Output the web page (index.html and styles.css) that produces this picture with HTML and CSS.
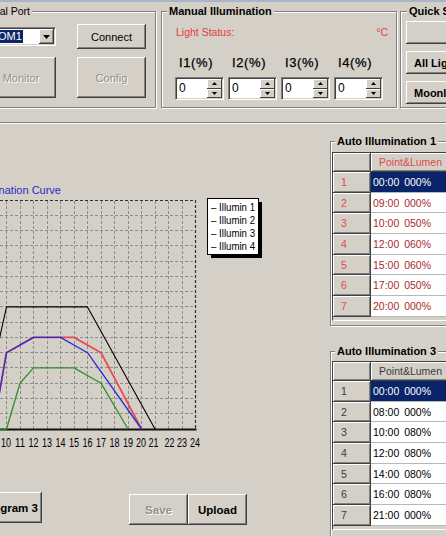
FILE: index.html
```html
<!DOCTYPE html>
<html>
<head>
<meta charset="utf-8">
<link rel="stylesheet" href="styles.css">
</head>
<body>
<div class="app">
  <div class="titlebar"></div>
  <div class="top">
    <div class="group serial">
      <div class="group-title serial-title">Serial Port</div>
      <div class="serial-grid">
        <div class="combo">
          <span class="combo-text"><span class="combo-sel">COM1</span></span>
          <span class="combo-btn"><svg width="7" height="4" viewBox="0 0 7 4"><path d="M0 0h7L3.5 4z" fill="#000"/></svg></span>
        </div>
        <button class="btn">Connect</button>
        <button class="btn disabled">Monitor</button>
        <button class="btn disabled">Config</button>
      </div>
    </div>

    <div class="group manual">
      <div class="group-title manual-title">Manual Illumination</div>
      <div class="status"><span>Light Status:</span><span>°C</span></div>
      <div class="spins">
        <div class="spin-col">
          <div class="spin-label">I1(%)</div>
          <div class="spin"><span class="spin-val">0</span><span class="spin-btns"><span class="sb"><svg width="5" height="3" viewBox="0 0 5 3"><path d="M2.5 0L5 3H0z"/></svg></span><span class="sb"><svg width="5" height="3" viewBox="0 0 5 3"><path d="M0 0h5L2.5 3z"/></svg></span></span></div>
        </div>
        <div class="spin-col">
          <div class="spin-label">I2(%)</div>
          <div class="spin"><span class="spin-val">0</span><span class="spin-btns"><span class="sb"><svg width="5" height="3" viewBox="0 0 5 3"><path d="M2.5 0L5 3H0z"/></svg></span><span class="sb"><svg width="5" height="3" viewBox="0 0 5 3"><path d="M0 0h5L2.5 3z"/></svg></span></span></div>
        </div>
        <div class="spin-col">
          <div class="spin-label">I3(%)</div>
          <div class="spin"><span class="spin-val">0</span><span class="spin-btns"><span class="sb"><svg width="5" height="3" viewBox="0 0 5 3"><path d="M2.5 0L5 3H0z"/></svg></span><span class="sb"><svg width="5" height="3" viewBox="0 0 5 3"><path d="M0 0h5L2.5 3z"/></svg></span></span></div>
        </div>
        <div class="spin-col">
          <div class="spin-label">I4(%)</div>
          <div class="spin"><span class="spin-val">0</span><span class="spin-btns"><span class="sb"><svg width="5" height="3" viewBox="0 0 5 3"><path d="M2.5 0L5 3H0z"/></svg></span><span class="sb"><svg width="5" height="3" viewBox="0 0 5 3"><path d="M0 0h5L2.5 3z"/></svg></span></span></div>
        </div>
      </div>
    </div>

    <div class="group quick">
      <div class="group-title quick-title">Quick Set</div>
      <div class="quick-btns">
        <button class="btn bold qbtn"></button>
        <button class="btn bold qbtn">All Light On</button>
        <button class="btn bold qbtn">Moonlight</button>
      </div>
    </div>
  </div>

  <div class="sep"></div>

  <div class="main">
    <div class="left">
      <svg class="chart" width="280" height="272" viewBox="0 180 280 272">
        <text class="chart-title" x="61" y="194" text-anchor="end">Illumination Curve</text>
        <path class="grid-minor" d="M-10 215.5H196M-10 230.5H196M-10 245.5H196M-10 261.5H196M-10 276.5H196M-10 291.5H196M-10 306.5H196M-10 322.5H196M-10 337.5H196M-10 352.5H196M-10 367.5H196M-10 383.5H196M-10 398.5H196M-10 413.5H196M-7.5 201V429M6.5 201V429M20.5 201V429M33.5 201V429M47.5 201V429M60.5 201V429M74.5 201V429M87.5 201V429M101.5 201V429M114.5 201V429M128.5 201V429M141.5 201V429M155.5 201V429M168.5 201V429M182.5 201V429"/>
        <path class="grid-border" d="M-10 200.5H195.5V429"/>
        <path class="axis" d="M-10 429.5H196.5"/>
        <polyline class="ln red" points="-7,429 6.5,352.7 33.5,337.4 74,337.4 101,352.7 141.5,429"/>
        <polyline class="ln blue" points="-7,429 6.5,352.7 33.5,337.4 60.5,337.4 87.5,352.7 141.5,429"/>
        <polyline class="ln green" points="-30,429 6.5,429 20,383.2 33.5,367.9 74,367.9 101,383.2 128,429"/>
        <polyline class="ln black" points="-20.5,429 6.5,306.9 87.5,306.9 155,429"/>
        <g class="xlab">
          <text x="6" y="447" textLength="10" lengthAdjust="spacingAndGlyphs">10</text>
          <text x="20" y="447" textLength="10" lengthAdjust="spacingAndGlyphs">11</text>
          <text x="33.5" y="447" textLength="10" lengthAdjust="spacingAndGlyphs">12</text>
          <text x="47" y="447" textLength="10" lengthAdjust="spacingAndGlyphs">13</text>
          <text x="60.5" y="447" textLength="10" lengthAdjust="spacingAndGlyphs">14</text>
          <text x="74" y="447" textLength="10" lengthAdjust="spacingAndGlyphs">15</text>
          <text x="87.5" y="447" textLength="10" lengthAdjust="spacingAndGlyphs">16</text>
          <text x="101" y="447" textLength="10" lengthAdjust="spacingAndGlyphs">17</text>
          <text x="114.5" y="447" textLength="10" lengthAdjust="spacingAndGlyphs">18</text>
          <text x="128" y="447" textLength="10" lengthAdjust="spacingAndGlyphs">19</text>
          <text x="141" y="447" textLength="10" lengthAdjust="spacingAndGlyphs">20</text>
          <text x="153.5" y="447" textLength="10" lengthAdjust="spacingAndGlyphs">21</text>
          <text x="169.5" y="447" textLength="10" lengthAdjust="spacingAndGlyphs">22</text>
          <text x="182" y="447" textLength="10" lengthAdjust="spacingAndGlyphs">23</text>
          <text x="195" y="447" textLength="10" lengthAdjust="spacingAndGlyphs">24</text>
        </g>
        <rect x="211" y="202" width="51" height="56" fill="#000"/>
        <rect class="legend-box" x="207.5" y="198.5" width="51" height="56"/>
        <g class="legend">
          <text x="211" y="211" textLength="44" lengthAdjust="spacingAndGlyphs">– Illumin 1</text>
          <text x="211" y="224" textLength="44" lengthAdjust="spacingAndGlyphs">– Illumin 2</text>
          <text x="211" y="237" textLength="44" lengthAdjust="spacingAndGlyphs">– Illumin 3</text>
          <text x="211" y="250" textLength="44" lengthAdjust="spacingAndGlyphs">– Illumin 4</text>
        </g>
      </svg>
      <div class="actions">
        <button class="btn bold big btn-program">Program 3</button>
        <button class="btn bold big disabled btn-save">Save</button>
        <button class="btn bold big btn-upload">Upload</button>
      </div>
    </div>

    <div class="right">
      <div class="group auto a1">
        <div class="group-title auto-title">Auto Illumination 1</div>
        <div class="grid-wrap">
          <div class="fgrid">
            <div class="fc fixed"></div><div class="fc fixed hdr">Point&amp;Lumen</div>
            <div class="fc fixed num">1</div><div class="fc data sel">00:00 000%</div>
            <div class="fc fixed num">2</div><div class="fc data">09:00 000%</div>
            <div class="fc fixed num">3</div><div class="fc data">10:00 050%</div>
            <div class="fc fixed num">4</div><div class="fc data">12:00 060%</div>
            <div class="fc fixed num">5</div><div class="fc data">15:00 060%</div>
            <div class="fc fixed num">6</div><div class="fc data">17:00 050%</div>
            <div class="fc fixed num">7</div><div class="fc data">20:00 000%</div>
          </div>
        </div>
      </div>
      <div class="group auto a3">
        <div class="group-title auto-title">Auto Illumination 3</div>
        <div class="grid-wrap">
          <div class="fgrid">
            <div class="fc fixed"></div><div class="fc fixed hdr">Point&amp;Lumen</div>
            <div class="fc fixed num">1</div><div class="fc data sel">00:00 000%</div>
            <div class="fc fixed num">2</div><div class="fc data">08:00 000%</div>
            <div class="fc fixed num">3</div><div class="fc data">10:00 080%</div>
            <div class="fc fixed num">4</div><div class="fc data">12:00 080%</div>
            <div class="fc fixed num">5</div><div class="fc data">14:00 080%</div>
            <div class="fc fixed num">6</div><div class="fc data">16:00 080%</div>
            <div class="fc fixed num">7</div><div class="fc data">21:00 000%</div>
          </div>
        </div>
      </div>
    </div>
  </div>
</div>
</body>
</html>
```

FILE: styles.css
```css
* { box-sizing: border-box; }
html, body { margin: 0; padding: 0; }
body {
  background: #d4d0c8;
  width: 446px;
  height: 536px;
  overflow: hidden;
  font-family: "Liberation Sans", Arial, sans-serif;
  font-size: 11px;
  color: #000;
}
.app { margin-left: -30px; width: 620px; }
.titlebar { height: 2px; background: #a9b4c9; }

.top { display: flex; padding: 9px 0 0 3px; }

.group {
  position: relative;
  flex: none;
  border: 1px solid #808080;
  box-shadow: inset 1px 1px 0 #fff, 1px 1px 0 #fff;
}
.group-title {
  position: absolute;
  top: -7px;
  padding: 0 2px;
  background: #d4d0c8;
  font-size: 11px;
  line-height: 12px;
  font-weight: bold;
  white-space: nowrap;
}

/* Serial port */
.serial { width: 183px; height: 97px; padding: 12px 0 0 12px; }
.serial-title { left: 5px; font-weight: normal; font-size: 10.5px; }
.serial-grid {
  display: grid;
  grid-template-columns: 70px 69px;
  grid-template-rows: 25px 41px;
  column-gap: 21px;
  row-gap: 8px;
}
.combo {
  align-self: center;
  height: 19px;
  display: flex;
  align-items: center;
  background: #fff;
  border: 1px solid;
  border-color: #808080 #fff #fff #808080;
  box-shadow: inset 1px 1px 0 #404040, inset -1px -1px 0 #d4d0c8;
  padding: 1px;
}
.combo-text { flex: 1; padding-left: 1px; }
.combo-sel {
  background: #0a246a;
  color: #fff;
  padding: 0 1px;
  line-height: 13px;
  display: inline-block;
}
.combo-btn {
  width: 15px;
  height: 15px;
  display: flex;
  align-items: center;
  justify-content: center;
  background: #d4d0c8;
  box-shadow: inset -1px -1px 0 #404040, inset 1px 1px 0 #fff, inset -2px -2px 0 #808080;
}

/* Buttons */
.btn {
  display: flex;
  align-items: center;
  justify-content: center;
  margin: 0;
  padding: 0;
  border: 0;
  background: #d4d0c8;
  font-family: "Liberation Sans", Arial, sans-serif;
  font-size: 11px;
  color: #000;
  white-space: nowrap;
  box-shadow: inset -1px -1px 0 #404040, inset 1px 1px 0 #fff, inset -2px -2px 0 #808080, inset 2px 2px 0 #d4d0c8;
}
.btn.bold { font-weight: bold; }
.btn.big { font-size: 11.5px; }
.btn.disabled { color: #928f88; text-shadow: 1px 1px 0 #fff; }

/* Manual */
.manual { margin-left: 5px; width: 236px; height: 97px; padding: 14px 8px 0 13px; }
.manual-title { left: 5px; }
.status {
  display: flex;
  justify-content: space-between;
  padding-left: 1px;
  color: #e23c3c;
  font-size: 10.5px;
  line-height: 12px;
}
.spins { display: flex; gap: 4px; margin-top: 17px; }
.spin-col { display: flex; flex-direction: column; width: 49px; }
.spin-label {
  height: 16px;
  margin-bottom: 6px;
  padding-left: 4px;
  font-size: 13px;
  line-height: 16px;
  letter-spacing: 0.6px;
  -webkit-text-stroke: 0.25px #000;
}
.spin {
  height: 23px;
  display: flex;
  background: #fff;
  border: 1px solid;
  border-color: #808080 #fff #fff #808080;
  box-shadow: inset 1px 1px 0 #404040, inset -1px -1px 0 #d4d0c8;
  padding: 1px;
}
.spin-val { flex: 1; padding-left: 2px; font-size: 12px; line-height: 19px; }
.spin-btns { width: 15px; display: flex; flex-direction: column; }
.sb {
  flex: 1;
  display: flex;
  align-items: center;
  justify-content: center;
  background: #d4d0c8;
  box-shadow: inset -1px -1px 0 #404040, inset 1px 1px 0 #fff;
}
.sb svg { fill: #000; }

/* Quick */
.quick { margin-left: 3px; width: 140px; height: 97px; padding: 9px 0 0 5px; }
.quick-title { left: 6px; }
.quick-btns { display: flex; flex-direction: column; gap: 7px; }
.qbtn { width: 130px; height: 23px; justify-content: flex-start; padding-left: 8px; }

.sep { margin-top: 14px; border-top: 1px solid #808080; border-bottom: 1px solid #fff; }

/* Main */
.main { display: flex; }
.left { flex: none; width: 360px; }
.chart { display: block; margin: 56px 0 0 30px; }
.chart-title { fill: #2b2bbf; font-size: 11px; font-family: "Liberation Sans", Arial, sans-serif; }
.grid-minor { fill: none; stroke: #8c8c8c; stroke-width: 1; stroke-dasharray: 3 2; }
.grid-border { fill: none; stroke: #303030; stroke-width: 1.2; stroke-dasharray: 3 2; }
.axis { fill: none; stroke: #111; stroke-width: 1.8; }
.ln { fill: none; stroke-width: 1.3; stroke-linejoin: round; }
.ln.red { stroke: #ea4c4c; stroke-width: 1.8; }
.ln.blue { stroke: #2b2bd8; }
.ln.green { stroke: #2f8f2f; }
.ln.black { stroke: #000; stroke-width: 1.1; }
.xlab text { font-size: 12px; font-family: "Liberation Sans", Arial, sans-serif; fill: #000; text-anchor: middle; }
.legend-box { fill: #fff; stroke: #000; stroke-width: 1; }
.legend text { font-size: 11px; font-family: "Liberation Sans", Arial, sans-serif; fill: #000; }

.actions { display: flex; align-items: flex-start; margin-top: 40px; padding-left: 7px; }
.btn-program { width: 65px; height: 31px; }
.btn-save { width: 59px; height: 31px; margin: 2px 0 0 87px; }
.btn-upload { width: 59px; height: 31px; margin-top: 2px; }

/* Right column */
.right { flex: none; width: 140px; padding-top: 17px; }
.auto { width: 140px; padding: 10px 0 0 1px; }
.a1 { height: 185px; }
.a3 { height: 200px; margin-top: 25px; padding-top: 9px; }
.auto-title { left: 4px; }
.grid-wrap {
  height: 169px;
  border-top: 1px solid #404040;
  border-left: 1px solid #404040;
  border-bottom: 1px solid #fff;
}
.fgrid {
  display: grid;
  grid-template-columns: 38px 80px;
  grid-template-rows: 19px repeat(7, 20.7px);
}
.fc {
  border-right: 1px solid #404040;
  border-bottom: 1px solid #404040;
  font-size: 10.5px;
  display: flex;
  align-items: center;
  white-space: nowrap;
}
.fixed {
  background: #d4d0c8;
  box-shadow: inset 1px 1px 0 #fff, inset -1px -1px 0 #808080;
}
.hdr { justify-content: center; }
.num { padding-left: 8px; }
.data { background: #fff; padding-left: 2px; word-spacing: 2px; border-bottom-color: #b8b8b8; border-right-color: #b8b8b8; }
.data.sel { background: #0a246a; color: #fff !important; }
.a1 .fixed { color: #e04a4a; }
.a1 .data { color: #a82a2a; }
.a3 .fixed { color: #3a3a3a; }
.a3 .data { color: #000; }
```
